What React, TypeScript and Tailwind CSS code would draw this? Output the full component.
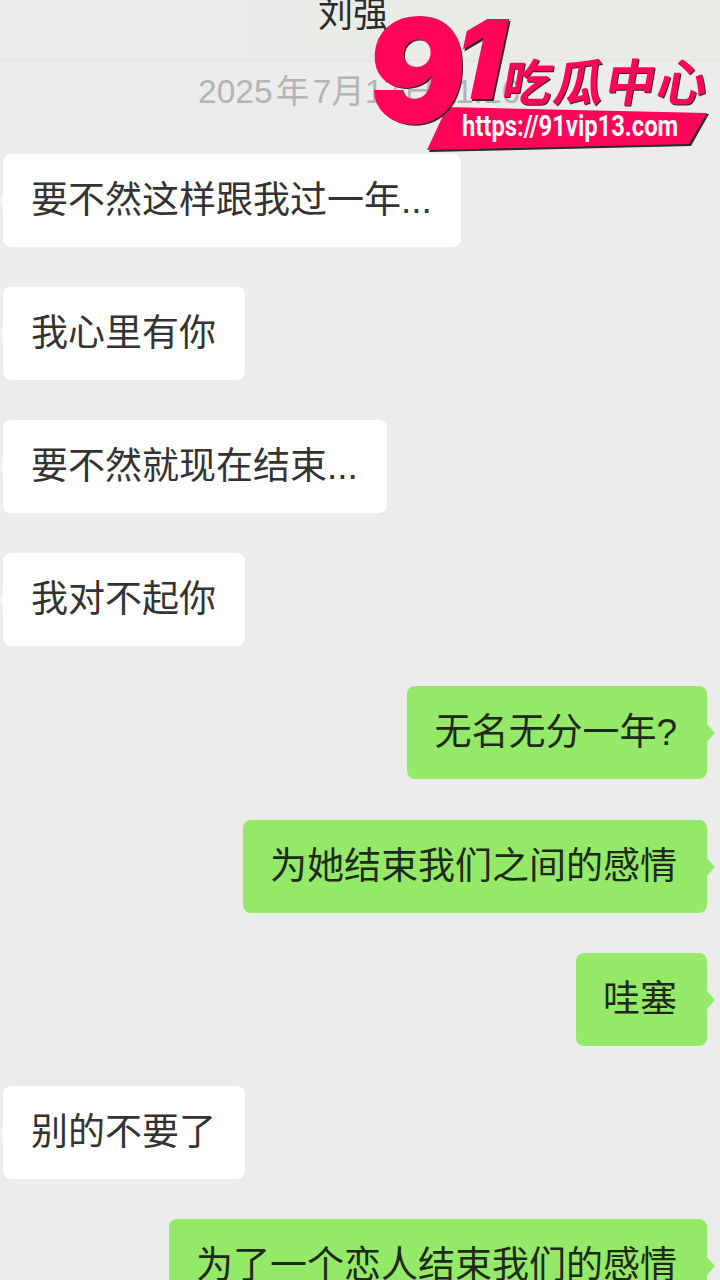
const cjk = "font-['Liberation_Sans','Noto_Sans_CJK_SC',sans-serif]";

type Msg = { text: string; me?: boolean };

const messages: Msg[] = [
  { text: "要不然这样跟我过一年..." },
  { text: "我心里有你" },
  { text: "要不然就现在结束..." },
  { text: "我对不起你" },
  { text: "无名无分一年?", me: true },
  { text: "为她结束我们之间的感情", me: true },
  { text: "哇塞", me: true },
  { text: "别的不要了" },
  { text: "为了一个恋人结束我们的感情", me: true },
];

function Bubble({ text, me }: Msg) {
  if (me) {
    return (
      <div className="flex justify-end pr-[13px]">
        <div className="relative h-[93px] shrink-0 rounded-[8px] bg-[#95e968] pr-[30px] pl-[27px] text-[37px] leading-[93px] whitespace-nowrap text-[#1f2a1a]">
          {text}
          <span className="absolute top-[38px] right-[-8px] h-0 w-0 border-y-[9px] border-l-[8px] border-y-transparent border-l-[#95e968]" />
        </div>
      </div>
    );
  }
  return (
    <div className="flex justify-start pl-[3px]">
      <div className="relative h-[93px] rounded-[8px] bg-white pr-[29px] pl-[28px] text-[37px] leading-[93px] whitespace-nowrap text-[#333333]">
        {text}
        <span className="absolute top-[38px] left-[-3px] h-0 w-0 border-y-[9px] border-r-[3px] border-y-transparent border-r-[#f6f6f6]" />
      </div>
    </div>
  );
}

function Logo() {
  return (
    <div className="absolute top-0 left-[360px] h-[160px] w-[360px]">
      <svg className="absolute top-0 left-0" width="360" height="160" viewBox="0 0 360 160">
        <polygon points="88,108 349,114 331,146 69,152" fill="#2a2a2a" />
        <polygon points="87,107 347,113 329,144 67,150" fill="#ff0558" />
      </svg>
      <span className="absolute top-[-1px] left-[10px] origin-left -skew-x-[3deg] font-['Inter',sans-serif] text-[142px] leading-[142px] font-black text-[#ff0558] [text-shadow:2px_2px_0_#2a2a2a] [-webkit-text-stroke:2px_#ff0558]">
        9
      </span>
      <span className="absolute top-[4px] left-[96px] origin-left -skew-x-[12deg] font-['Inter',sans-serif] text-[110px] leading-[110px] font-black text-[#ff0558] [text-shadow:2px_2px_0_#2a2a2a]">
        1
      </span>
      <span className="absolute top-[49px] left-[144px] -skew-x-[10deg] font-['Noto_Sans_CJK_SC',sans-serif] text-[50px] leading-[60px] font-bold tracking-[1.5px] whitespace-nowrap text-[#ff0558] [text-shadow:1px_1px_0_#2a2a2a]">
        吃瓜中心
      </span>
      <span className="absolute top-[109px] left-[102px] origin-left scale-x-[0.82] font-['Roboto',sans-serif] text-[29px] leading-[34px] font-bold whitespace-nowrap text-white">
        https://91vip13.com
      </span>
    </div>
  );
}

export default function App() {
  return (
    <div className={`relative h-[1280px] w-[720px] overflow-hidden bg-[#ececec] ${cjk}`}>
      <div className="flex h-[61px] items-end justify-center overflow-hidden border-b border-[#e2e2e2] bg-gradient-to-r from-[#ececec] from-30% to-[#e8ece5] to-55% pr-[14px] pb-[25px]">
        <span className="text-[35px] leading-[40px] text-[#2b2b2b]">刘强</span>
      </div>
      <div className="h-[92.6px] pt-[12px] pl-[198px]">
        <span className="text-[33.5px] leading-[38px] whitespace-nowrap text-[#b4b4b4] [word-spacing:-6px]">
          2025 年 7月17日 11:16
        </span>
      </div>
      <div className="flex flex-col gap-[40.2px]">
        {messages.map((m) => (
          <Bubble key={m.text} {...m} />
        ))}
      </div>
      <Logo />
    </div>
  );
}
